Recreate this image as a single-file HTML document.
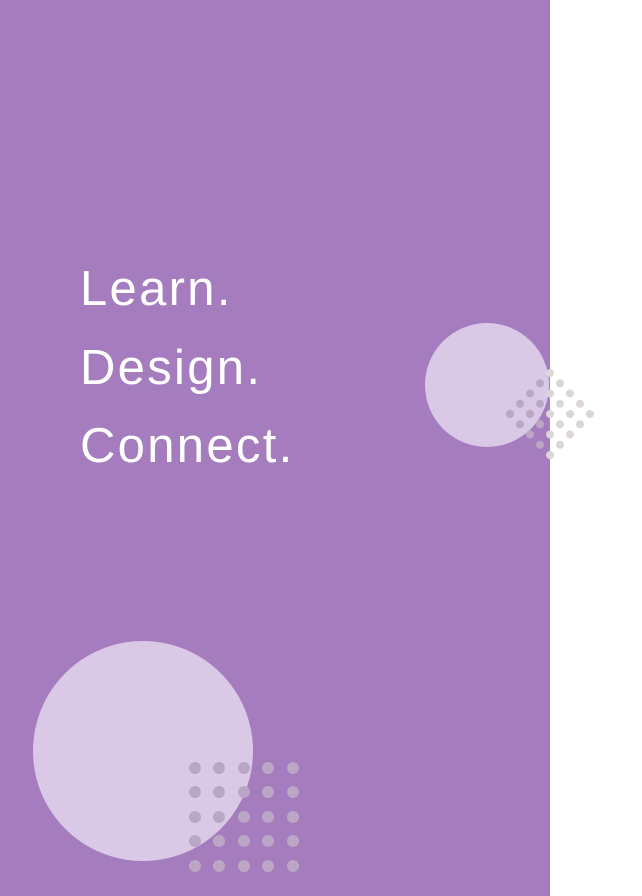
<!DOCTYPE html>
<html><head><style>
html,body{margin:0;padding:0;width:642px;height:896px;overflow:hidden;background:#fff;}
.p{position:absolute;left:0;top:0;width:550px;height:896px;background:#a57cbe;}
.t{position:absolute;left:80px;font-family:"Liberation Sans",sans-serif;font-size:49px;color:#fff;letter-spacing:2.3px;line-height:1;}
</style></head><body>
<div class="p"></div>
<svg width="642" height="896" style="position:absolute;left:0;top:0">
<circle cx="487" cy="385" r="62" fill="#dac9e6"/>
<circle cx="143" cy="751" r="110" fill="#dac9e6"/>
<g id="d"></g>
</svg>
<div class="t" style="top:265px">Learn.</div>
<div class="t" style="top:344px">Design.</div>
<div class="t" style="top:422px">Connect.</div>
<script>
var g=document.getElementById('d'),s='';
for(var k=0;k<9;k++){var hw=Math.min(k,8-k);for(var m=-hw;m<=hw;m+=2){var x=550+10*m,y=373+10.25*k;var c=x<550?'#bba6c6':'#dcd6d6';s+='<circle cx="'+x+'" cy="'+y+'" r="4" fill="'+c+'"/>';}}
var xs=[195,219,244,268,293],ys=[768,792,817,841,866];
for(var i=0;i<5;i++)for(var j=0;j<5;j++)s+='<circle cx="'+xs[i]+'" cy="'+ys[j]+'" r="6" fill="#bba6c6"/>';
g.innerHTML=s;
</script>
</body></html>
